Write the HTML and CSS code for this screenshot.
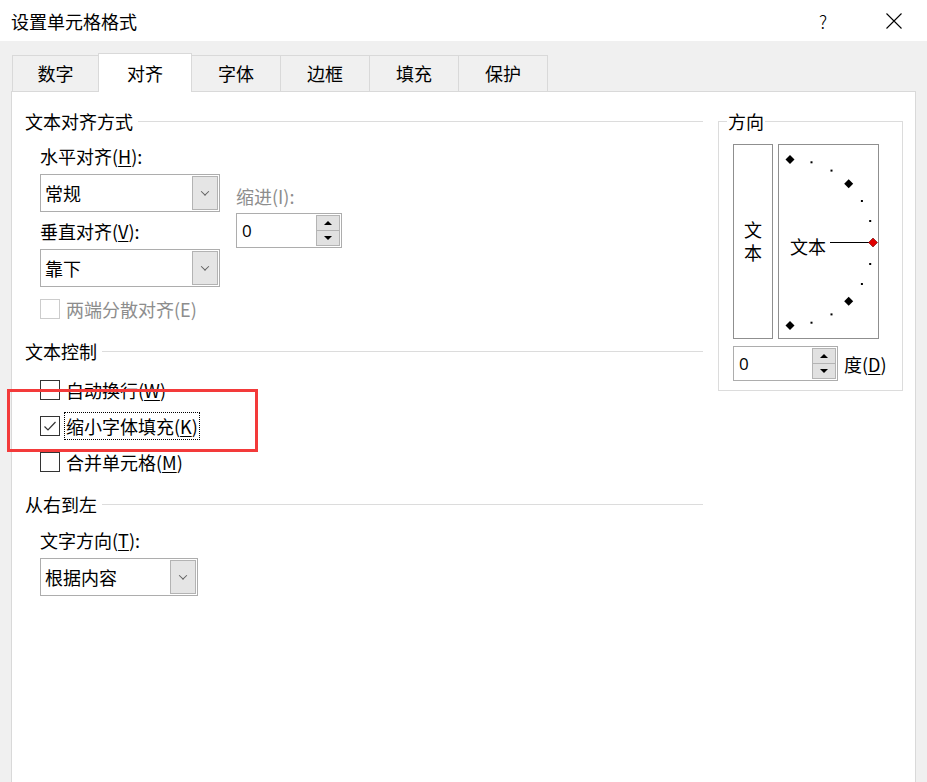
FILE: index.html
```html
<!DOCTYPE html>
<html lang="zh-CN">
<head>
  <meta charset="UTF-8">
  <meta name="viewport" content="width=device-width, initial-scale=1.0">
  <title>设置单元格格式</title>
  <link rel="stylesheet" href="styles.css">
</head>
<body>
  <div class="titlebar">
    <span class="title">设置单元格格式</span>
    <span class="title-btn help">?</span>
    <span class="title-btn close">
      <svg width="16" height="16" viewBox="0 0 16 16"><path d="M0.5 0.5 L15.5 15.5 M15.5 0.5 L0.5 15.5" stroke="#000" stroke-width="1.1" fill="none"/></svg>
    </span>
  </div>

  <div class="tabs">
    <div class="tab">数字</div>
    <div class="tab active">对齐</div>
    <div class="tab">字体</div>
    <div class="tab">边框</div>
    <div class="tab">填充</div>
    <div class="tab">保护</div>
  </div>

  <div class="panel">
    <div class="left">
      <div class="group-title"><span>文本对齐方式</span></div>
      <div class="align-row">
        <div class="align-col">
          <div class="label">水平对齐(<u>H</u>):</div>
          <div class="select"><span>常规</span><span class="drop"><i class="chev"></i></span></div>
          <div class="label second">垂直对齐(<u>V</u>):</div>
          <div class="select"><span>靠下</span><span class="drop"><i class="chev"></i></span></div>
        </div>
        <div class="indent-col">
          <div class="label disabled">缩进(I):</div>
          <div class="spin">
            <span class="spin-val">0</span>
            <span class="spin-btns"><span class="up"><i></i></span><span class="down"><i></i></span></span>
          </div>
        </div>
      </div>
      <div class="check first disabled"><span class="box"></span><span class="check-text">两端分散对齐(E)</span></div>

      <div class="group-title ctrl"><span>文本控制</span></div>
      <div class="check opt"><span class="box"></span><span class="check-text">自动换行(<u>W</u>)</span></div>
      <div class="check opt"><span class="box">
        <svg width="18" height="18" viewBox="0 0 18 18"><path d="M3.5 9.5 L7 13 L14.5 5" stroke="#333" stroke-width="1.2" fill="none"/></svg>
      </span><span class="check-text focus">缩小字体填充(<u>K</u>)</span></div>
      <div class="check opt"><span class="box"></span><span class="check-text">合并单元格(<u>M</u>)</span></div>

      <div class="group-title rtl"><span>从右到左</span></div>
      <div class="label dir-label">文字方向(<u>T</u>):</div>
      <div class="select short"><span>根据内容</span><span class="drop"><i class="chev"></i></span></div>
    </div>

    <fieldset class="orient">
      <legend>方向</legend>
      <div class="orient-row">
        <div class="vtext"><span>文本</span></div>
        <div class="dial">
          <svg width="99" height="193" viewBox="0 0 99 193">
            <g fill="#000">
              <path d="M11 10 L15.5 14.5 L11 19 L6.5 14.5 Z"/>
              <path d="M69.7 34.3 L74.2 38.8 L69.7 43.3 L65.2 38.8 Z"/>
              <path d="M69.7 151.7 L74.2 156.2 L69.7 160.7 L65.2 156.2 Z"/>
              <path d="M11 176 L15.5 180.5 L11 185 L6.5 180.5 Z"/>
              <rect x="31.5" y="16.3" width="2" height="2"/>
              <rect x="51.5" y="24.6" width="2" height="2"/>
              <rect x="81.9" y="55" width="2" height="2"/>
              <rect x="90.2" y="75" width="2" height="2"/>
              <rect x="90.2" y="118" width="2" height="2"/>
              <rect x="81.9" y="138" width="2" height="2"/>
              <rect x="51.5" y="168.4" width="2" height="2"/>
              <rect x="31.5" y="176.7" width="2" height="2"/>
            </g>
            <line x1="51" y1="97.5" x2="90" y2="97.5" stroke="#000" stroke-width="1"/>
            <path d="M94 93 L98.5 97.5 L94 102 L89.5 97.5 Z" fill="#e00000" stroke="#600" stroke-width="0.6"/>
            <text x="11" y="109" class="dial-text">文本</text>
          </svg>
        </div>
      </div>
      <div class="deg-row">
        <div class="spin deg">
          <span class="spin-val">0</span>
          <span class="spin-btns"><span class="up"><i></i></span><span class="down"><i></i></span></span>
        </div>
        <span class="deg-label">度(<u>D</u>)</span>
      </div>
    </fieldset>

    <div class="mark"></div>
  </div>
</body>
</html>
```

FILE: styles.css
```css
* { box-sizing: border-box; }
html, body { margin: 0; }
body { width: 927px; height: 782px; overflow: hidden; background: #f0f0f0; color: #000; font-family: "Noto Sans CJK SC", "Noto Sans", sans-serif; font-size: 18px; }
u { text-decoration: underline; text-underline-offset: 2px; text-decoration-thickness: 1px; }

.titlebar { height: 41px; background: #fff; display: flex; align-items: center; padding: 0 13px 0 11px; }
.title { flex: 1; line-height: 24px; }
.title-btn { width: 40px; height: 30px; display: flex; align-items: center; justify-content: center; }
.help { font-weight: 300; margin-right: 31px; }

.tabs { display: flex; align-items: flex-end; height: 38px; margin-top: 12px; padding-left: 12px; }
.tab { width: 90px; height: 36px; margin-left: -1px; border: 1px solid #d9d9d9; border-bottom: none; display: flex; align-items: center; justify-content: center; line-height: 24px; padding-bottom: 2px; }
.tab:first-child { margin-left: 0; width: 87px; }
.tab.active { background: #fff; height: 39px; width: 94px; margin-bottom: -1px; position: relative; z-index: 1; padding-bottom: 0; }

.panel { position: relative; margin-left: 11px; width: 905px; height: 700px; background: #fff; border: 1px solid #d9d9d9; padding-top: 17px; display: flex; align-items: flex-start; }
.left { width: 691px; padding-left: 13px; }

.group-title { display: flex; align-items: center; height: 24px; line-height: 24px; }
.group-title::after { content: ""; flex: 1; height: 1px; background: #dcdcdc; margin-left: 5px; }
.group-title.ctrl { margin-top: 18px; }
.group-title.rtl { margin-top: 17px; }

.label { height: 22px; line-height: 22px; white-space: nowrap; }
.label.second { margin-top: 8px; }
.disabled { color: #8d8d8d; }

.align-row { display: flex; margin-top: 12px; padding-left: 15px; }
.align-col { width: 180px; }
.indent-col { margin-left: 16px; padding-top: 40px; }

.select { width: 180px; height: 38px; margin-top: 7px; border: 1px solid #adadad; display: flex; align-items: center; padding-left: 4px; line-height: 24px; }
.select.short { width: 158px; margin-left: 15px; }
.drop { margin-left: auto; margin-right: 1px; width: 26px; height: 34px; background: #e5e5e5; border: 1px solid #b3b3b3; display: flex; align-items: center; justify-content: center; }
.chev { width: 6px; height: 6px; border-right: 1px solid #606060; border-bottom: 1px solid #606060; transform: rotate(45deg) translate(-1px, -1px); }

.spin { width: 106px; height: 35px; margin-top: 6px; border: 1px solid #adadad; display: flex; align-items: center; padding-left: 5px; }
.spin-val { flex: 1; line-height: 24px; font-family: "Open Sans", "Noto Sans", sans-serif; font-size: 17px; }
.spin-btns { width: 24px; height: 31px; margin-right: 1px; display: flex; flex-direction: column; }
.spin-btns span { flex: 1; background: #e1e1e1; border: 1px solid #b4b4b4; display: flex; align-items: center; justify-content: center; }
.spin-btns .down { margin-top: -1px; }
.spin-btns .up i { border-left: 4px solid transparent; border-right: 4px solid transparent; border-bottom: 4px solid #000; }
.spin-btns .down i { border-left: 4px solid transparent; border-right: 4px solid transparent; border-top: 4px solid #000; }

.check { display: flex; align-items: center; padding-left: 15px; height: 26px; margin-top: 10px; }
.check.first { height: 24px; }
.group-title.ctrl + .check { margin-top: 14px; }
.box { width: 20px; height: 20px; border: 1px solid #333; display: flex; align-items: center; justify-content: center; background: #fff; }
.disabled .box { border-color: #cccccc; }
.check-text { margin-left: 4px; padding: 0 1px; height: 28px; line-height: 26px; border: 1px dotted transparent; white-space: nowrap; }
.check-text.focus { border-color: #000; }

.dir-label { margin-top: 13px; padding-left: 15px; }

.orient { margin: 0 0 0 15px; width: 185px; border: 1px solid #dcdcdc; padding: 0 9px 9px 8px; }
.orient legend { padding: 0 1px; line-height: 24px; }
.orient-row { display: flex; gap: 5px; margin: 11px 0 0 6px; }
.vtext { width: 40px; height: 195px; border: 1px solid #8f8f8f; display: flex; align-items: center; justify-content: center; padding-top: 5px; }
.vtext span { writing-mode: vertical-rl; text-orientation: upright; letter-spacing: 5px; line-height: 24px; }
.dial { width: 101px; height: 195px; border: 1px solid #8f8f8f; display: flex; }
.dial-text { font-family: "Noto Sans CJK SC", sans-serif; font-size: 18px; fill: #000; }
.deg-row { display: flex; align-items: center; margin: 7px 0 0 6px; }
.spin.deg { width: 105px; margin-top: 0; }
.deg-label { margin-left: 6px; line-height: 24px; }

.mark { position: absolute; left: -5px; top: 297px; width: 251px; height: 63px; border: 3px solid #f33a3a; }
```
